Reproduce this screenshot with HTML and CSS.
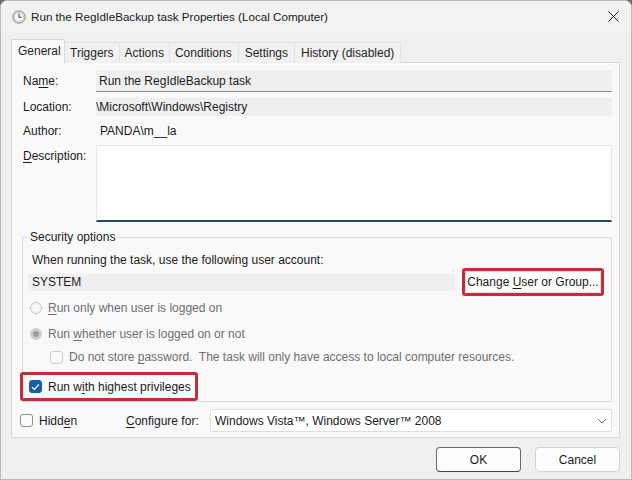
FILE: index.html
```html
<!DOCTYPE html>
<html>
<head>
<meta charset="utf-8">
<link rel="stylesheet" href="styles.css">
</head>
<body>
<div class="window">
  <div class="titlebar">
    <svg class="clock" width="14" height="14" viewBox="0 0 14 14">
      <circle cx="7" cy="7" r="6.2" fill="#e4e4e4" stroke="#8a8a8a" stroke-width="1"/>
      <circle cx="7" cy="7" r="4.6" fill="#f7f7f7" stroke="#b5b5b5" stroke-width="0.6"/>
      <path d="M7 3.6 V7.2 H9.6" fill="none" stroke="#4a4a4a" stroke-width="1.1"/>
    </svg>
    <span class="title">Run the RegIdleBackup task Properties (Local Computer)</span>
    <svg class="close" width="11" height="11" viewBox="0 0 11 11">
      <path d="M0.5 0.5 L10.5 10.5 M10.5 0.5 L0.5 10.5" stroke="#1f1f1f" stroke-width="1"/>
    </svg>
  </div>
  <div class="content">
    <div class="tabs">
      <div class="tab selected">General</div>
      <div class="tab">Triggers</div>
      <div class="tab">Actions</div>
      <div class="tab">Conditions</div>
      <div class="tab">Settings</div>
      <div class="tab">History (disabled)</div>
    </div>
    <div class="panel">
      <div class="row row-name">
        <div class="label">Na<u>m</u>e:</div>
        <div class="field field-name">Run the RegIdleBackup task</div>
      </div>
      <div class="row row-loc">
        <div class="label">Location:</div>
        <div class="field field-loc">\Microsoft\Windows\Registry</div>
      </div>
      <div class="row row-author">
        <div class="label">Author:</div>
        <div class="value">PANDA\m__la</div>
      </div>
      <div class="row row-desc">
        <div class="label label-top"><u>D</u>escription:</div>
        <div class="textarea"></div>
      </div>
      <fieldset class="group">
        <legend>Security options</legend>
        <div class="group-inner">
          <div class="account-text">When running the task, use the following user account:</div>
          <div class="account-row">
            <div class="account-field">SYSTEM</div>
            <div class="highlight hl-button"><div class="button change"><span>Change <u>U</u>ser or Group...</span></div></div>
          </div>
          <div class="option radio-row">
            <span class="radio"></span>
            <span class="disabled"><u>R</u>un only when user is logged on</span>
          </div>
          <div class="option radio-row radio-second">
            <span class="radio checked"></span>
            <span class="disabled">Run <u>w</u>hether user is logged on or not</span>
          </div>
          <div class="option check-row">
            <span class="checkbox"></span>
            <span class="disabled">Do not store <u>p</u>assword.&nbsp; The task will only have access to local computer resources.</span>
          </div>
          <div class="highlight hl-check">
            <span class="checkbox checked">
              <svg width="9" height="8" viewBox="0 0 9 8"><path d="M1 4.2 L3.4 6.4 L8 1.4" fill="none" stroke="#ffffff" stroke-width="1.2"/></svg>
            </span>
            <span>Run w<u>i</u>th highest privileges</span>
          </div>
        </div>
      </fieldset>
      <div class="bottom-row">
        <span class="checkbox hidden-box"></span>
        <span class="hidden-label">Hidd<u>e</u>n</span>
        <span class="configure-label"><u>C</u>onfigure for:</span>
        <div class="select">
          <span>Windows Vista™, Windows Server™ 2008</span>
          <svg width="10" height="6" viewBox="0 0 10 6"><path d="M1 1 L5 5 L9 1" fill="none" stroke="#6a6a6a" stroke-width="1"/></svg>
        </div>
      </div>
    </div>
    <div class="buttons">
      <div class="button dialog-btn default">OK</div>
      <div class="button dialog-btn">Cancel</div>
    </div>
  </div>
</div>
</body>
</html>
```
FILE: styles.css
```css
* { box-sizing: border-box; }
html, body { margin: 0; padding: 0; background: #6b6b6b; }
body {
  font-family: "Liberation Sans", Arial, sans-serif;
  font-size: 12px;
  color: #1b1b1b;
}
u { text-decoration: underline; text-underline-offset: 2px; }

.window {
  width: 632px;
  height: 480px;
  background: #f0f0f0;
  border: 1px solid #b9b9b9;
  border-radius: 7px 7px 0 0;
  display: flex;
  flex-direction: column;
  overflow: hidden;
}

.titlebar {
  height: 31px;
  flex: none;
  display: flex;
  align-items: center;
  background: #f2f2f2;
  padding-left: 11px;
  padding-right: 11px;
}
.clock { flex: none; margin-right: 5px; margin-top: 1px; }
.title { flex: 1; font-size: 11.65px; color: #1a1a1a; }
.close { flex: none; margin-right: 1px; }

.content {
  flex: 1;
  display: flex;
  flex-direction: column;
  padding: 7px 11px 0 10px;
}

.tabs {
  display: flex;
  align-items: flex-end;
  height: 24px;
  flex: none;
  margin-bottom: -1px;
  position: relative;
  z-index: 1;
}
.tab {
  height: 21px;
  line-height: 20px;
  padding: 0 5px;
  border: 1px solid #e2e2e2;
  border-left: none;
  border-bottom: none;
  background: #f1f1f1;
  color: #1f1f1f;
  white-space: nowrap;
}
.tab:nth-child(3) { padding-left: 5px; padding-right: 5px; }
.tab:nth-child(4) { padding-left: 5px; padding-right: 6px; }
.tab:nth-child(5) { padding-left: 6px; padding-right: 6px; }
.tab:nth-child(6) { padding-left: 6px; padding-right: 6px; }
.tab.selected {
  height: 24px;
  line-height: 22px;
  padding: 0 6px 0 6px;
  border: 1px solid #dadada;
  border-bottom: none;
  background: #f9f9f9;
  width: 54px;
}

.panel {
  flex: none;
  height: 376px;
  background: #f9f9f9;
  border: 1px solid #dadada;
  padding: 7px 7px 0 11px;
  display: flex;
  flex-direction: column;
}

.row { display: flex; align-items: center; }
.label { width: 73px; flex: none; color: #1b1b1b; }
.label-top { align-self: flex-start; padding-top: 4px; }
.field {
  flex: 1;
  background: #efefef;
  padding-left: 3px;
  display: flex;
  align-items: center;
  white-space: nowrap;
}
.field-name { height: 22px; border-bottom: 1px solid #898989; padding-left: 3px; }
.row-loc { margin-top: 6px; }
.field-loc { height: 18px; padding-left: 0; }
.row-author { margin-top: 6px; height: 18px; }
.value { padding-left: 4px; }
.row-desc { margin-top: 5px; }
.textarea {
  flex: 1;
  height: 77px;
  background: #ffffff;
  border: 1px solid #e6e6e6;
  border-bottom: 2px solid #2d4a59;
}

.group {
  margin: 7px 0 0 -1px;
  padding: 0;
  border: 1px solid #dcdcdc;
  min-width: 0;
}
.group legend {
  margin-left: 5px;
  padding: 0 2px;
  line-height: 16px;
  height: 16px;
  color: #1b1b1b;
}
.group-inner { padding: 8px 7px 0 5px; }
.account-text { padding-left: 4px; line-height: 15px; height: 15px; }
.account-row { display: flex; align-items: center; height: 28px; }
.account-field {
  flex: 1;
  height: 17px;
  background: #efefef;
  padding-left: 4px;
  line-height: 17px;
  margin-right: 7px;
}
.highlight {
  border: 3px solid #c52d3b;
  border-radius: 3px;
}
.hl-button { height: 28px; width: 142px; flex: none; padding: 0; }
.button {
  background: #fdfdfd;
  border: 1px solid #d3d3d3;
  border-radius: 4px;
  display: flex;
  align-items: center;
  justify-content: center;
  color: #1b1b1b;
}
.change { height: 22px; border-radius: 2px; border-color: #e2e2e2; white-space: nowrap; }

.option { display: flex; align-items: center; }
.radio-row { height: 24px; padding-left: 2px; }
.radio-second { margin-top: 2px; }
.radio {
  width: 12px;
  height: 12px;
  border-radius: 50%;
  border: 1px solid #c9c9c9;
  background: #f7f7f7;
  margin-right: 6px;
  flex: none;
  display: flex;
  align-items: center;
  justify-content: center;
}
.radio.checked { border: 3px solid #cfcfcf; background: #9c9c9c; }
.disabled { color: #6e6e6e; white-space: nowrap; }
.check-row { height: 22px; padding-left: 22px; }
.checkbox {
  width: 13px;
  height: 13px;
  border: 1px solid #8e8e8e;
  border-radius: 3px;
  background: #fbfbfb;
  flex: none;
  margin-right: 6px;
  display: flex;
  align-items: center;
  justify-content: center;
}
.check-row .checkbox { border-color: #cdcdcd; }
.checkbox.checked { background: #165ea9; border-color: #165ea9; }

.hl-check {
  margin: 4px 0 0 -8px;
  width: 178px;
  height: 29px;
  display: flex;
  align-items: center;
  padding-left: 6px;
}

.bottom-row {
  display: flex;
  align-items: center;
  margin-top: 7px;
  height: 23px;
}
.hidden-box { margin-left: -3px; }
.hidden-label { width: 87px; }
.configure-label { width: 84px; }
.select {
  flex: 1;
  height: 23px;
  background: #ffffff;
  border: 1px solid #dedede;
  border-radius: 2px;
  display: flex;
  align-items: center;
  justify-content: space-between;
  padding: 0 4px 0 4px;
  white-space: nowrap;
}

.buttons {
  display: flex;
  justify-content: flex-end;
  gap: 14px;
  margin-top: 9px;
}
.dialog-btn { width: 85px; height: 25px; }
.dialog-btn.default { border-color: #5f6b73; border-bottom-color: #3c4a55; }
```
